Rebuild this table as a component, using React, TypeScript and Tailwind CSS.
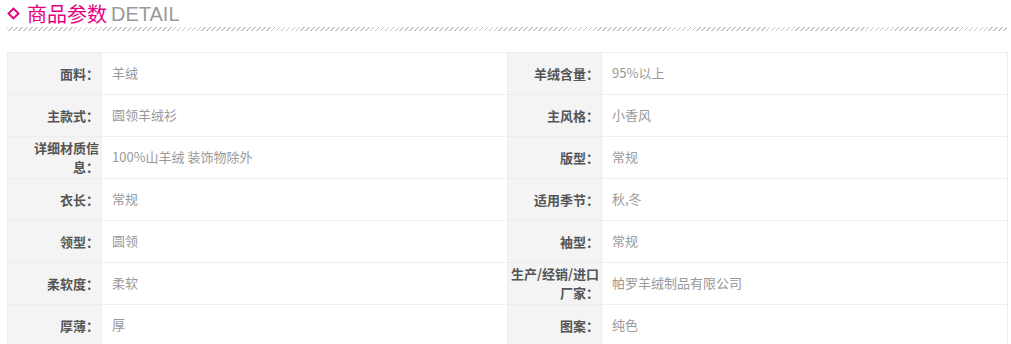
const rows: [string, string, string, string][] = [
  ["面料：", "羊绒", "羊绒含量：", "95%以上"],
  ["主款式：", "圆领羊绒衫", "主风格：", "小香风"],
  ["详细材质信息：", "100%山羊绒 装饰物除外", "版型：", "常规"],
  ["衣长：", "常规", "适用季节：", "秋,冬"],
  ["领型：", "圆领", "袖型：", "常规"],
  ["柔软度：", "柔软", "生产/经销/进口厂家：", "帕罗羊绒制品有限公司"],
  ["厚薄：", "厚", "图案：", "纯色"],
];

export default function App() {
  return (
    <div className="w-[1011px] h-[344px] overflow-hidden bg-white px-[7px] font-['Microsoft_YaHei','Noto_Sans_CJK_SC',sans-serif]">
      {/* 标题 */}
      <div className="flex items-center h-[27px]">
        <span className="ml-[2px] mr-[9px] w-[9px] h-[9px] rotate-45 border-2 border-[#e5007f]" />
        <span className="text-[20px] leading-[26px] text-[#e5007f]">商品参数</span>
        <span className="ml-[4px] text-[20px] leading-[26px] text-[#999] font-['Liberation_Sans',sans-serif]">DETAIL</span>
      </div>
      <div className="h-[4px] w-[1000px] bg-[repeating-linear-gradient(135deg,#c8c8c8_0,#c8c8c8_1.2px,transparent_1.2px,transparent_3.5px)]" />

      {/* 参数表 */}
      <table className="mt-[21px] w-[1000px] border-collapse table-fixed text-[13px]">
        <colgroup>
          <col className="w-[94px]" />
          <col className="w-[406px]" />
          <col className="w-[94px]" />
          <col className="w-[406px]" />
        </colgroup>
        <tbody>
          {rows.map((r, i) => (
            <tr key={i} className="h-[42px]">
              <td className="bg-[#f4f4f4] border border-[#eee] pl-[2px] pr-[2px] pb-[1px] text-right font-bold text-[#555] leading-[19px]">{r[0]}</td>
              <td className="border border-[#eee] pl-[10px] pb-[1px] text-[#999]">{r[1]}</td>
              <td className="bg-[#f4f4f4] border border-[#eee] pl-[2px] pr-[2px] pb-[1px] text-right font-bold text-[#555] leading-[19px]">{r[2]}</td>
              <td className="border border-[#eee] pl-[10px] pb-[1px] text-[#999]">{r[3]}</td>
            </tr>
          ))}
        </tbody>
      </table>
    </div>
  );
}
